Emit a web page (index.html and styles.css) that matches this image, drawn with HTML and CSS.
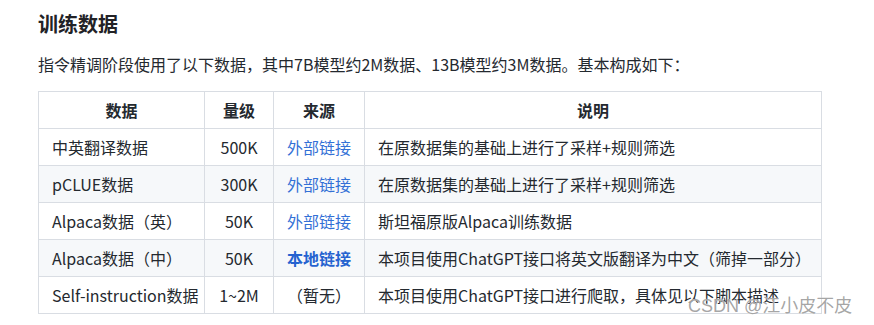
FILE: index.html
```html
<!DOCTYPE html>
<html lang="zh-CN">
<head>
<meta charset="utf-8">
<link rel="stylesheet" href="styles.css">
</head>
<body>
<div class="article">
  <h2 class="title">训练数据</h2>
  <p class="intro">指令精调阶段使用了以下数据，其中7B模型约2M数据、13B模型约3M数据。基本构成如下：</p>
  <table class="data-table">
    <colgroup>
      <col class="c1"><col class="c2"><col class="c3"><col class="c4">
    </colgroup>
    <thead>
      <tr><th>数据</th><th>量级</th><th>来源</th><th>说明</th></tr>
    </thead>
    <tbody>
      <tr><td>中英翻译数据</td><td class="center">500K</td><td class="center"><a class="link" href="#">外部链接</a></td><td>在原数据集的基础上进行了采样+规则筛选</td></tr>
      <tr><td>pCLUE数据</td><td class="center">300K</td><td class="center"><a class="link" href="#">外部链接</a></td><td>在原数据集的基础上进行了采样+规则筛选</td></tr>
      <tr><td>Alpaca数据（英）</td><td class="center">50K</td><td class="center"><a class="link" href="#">外部链接</a></td><td>斯坦福原版Alpaca训练数据</td></tr>
      <tr><td>Alpaca数据（中）</td><td class="center">50K</td><td class="center"><a class="link strong" href="#">本地链接</a></td><td>本项目使用ChatGPT接口将英文版翻译为中文（筛掉一部分）</td></tr>
      <tr><td>Self-instruction数据</td><td class="center">1~2M</td><td class="center">（暂无）</td><td>本项目使用ChatGPT接口进行爬取，具体见以下脚本描述</td></tr>
    </tbody>
  </table>
</div>
<div class="watermark">CSDN @江小皮不皮</div>
</body>
</html>
```
FILE: styles.css
```css
html, body {
  margin: 0;
  padding: 0;
  background: #ffffff;
}
body {
  font-family: "Noto Sans CJK SC", sans-serif;
  color: #24292f;
  width: 874px;
  height: 325px;
  overflow: hidden;
  position: relative;
}
.article {
  padding: 10px 38px 0 38px;
}
.title {
  margin: 0;
  font-size: 20px;
  line-height: 28px;
  font-weight: 700;
  color: #222226;
}
.intro {
  margin: 14px 0 15px 0;
  font-size: 16px;
  line-height: 24px;
  color: #24292f;
}
.data-table {
  border-collapse: collapse;
  table-layout: fixed;
  width: 783px;
  font-size: 16px;
}
.c1 { width: 166px; }
.c2 { width: 69px; }
.c3 { width: 91px; }
.c4 { width: 457px; }
.data-table th,
.data-table td {
  border: 1px solid #d9dde3;
  padding: 6px 0 6px 13px;
  line-height: 24px;
  white-space: nowrap;
  text-align: left;
}
.data-table th {
  font-weight: 700;
  text-align: center;
  padding-left: 0;
}
.data-table td.center {
  text-align: center;
  padding-left: 0;
}
.data-table tbody tr:nth-child(even) {
  background: #f6f8fa;
}
.link {
  color: #3370d6;
  text-decoration: none;
}
.link.strong {
  font-weight: 700;
  color: #2563d0;
}
.watermark {
  position: absolute;
  left: 688px;
  top: 294px;
  font-family: "Liberation Sans", "Noto Sans CJK SC", sans-serif;
  font-size: 18px;
  line-height: 24px;
  color: rgba(150, 150, 150, 0.85);
  text-shadow: 0 0 1px #fff;
  white-space: nowrap;
}
```
